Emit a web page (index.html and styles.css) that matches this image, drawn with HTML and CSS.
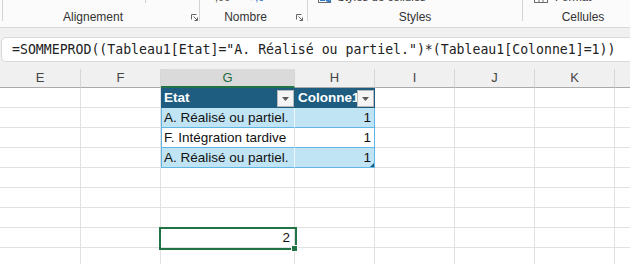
FILE: index.html
```html
<!DOCTYPE html>
<html lang="fr">
<head>
<meta charset="utf-8">
<title>Excel</title>
<link rel="stylesheet" href="styles.css">
</head>
<body>
<div class="ribbon">
  <div class="sep"></div>
  <div class="grp g1">
    <div class="top"><span class="tick"></span></div>
    <div class="lrow">
      <div class="lbl">Alignement</div>
      <div class="lnch l1"><svg width="7" height="7" viewBox="0 0 7 7"><path d="M0.5 5.5V0.5H5.5M2.5 2.5L6.5 6.5M3.5 6.5H6.5V3.5" fill="none" stroke="#666" stroke-width="1"/></svg></div>
    </div>
  </div>
  <div class="sep"></div>
  <div class="grp g2">
    <div class="top"><span class="dec">,00</span><span class="dec blue">→,0</span></div>
    <div class="lrow">
      <div class="lbl">Nombre</div>
      <div class="lnch l2"><svg width="7" height="7" viewBox="0 0 7 7"><path d="M0.5 5.5V0.5H5.5M2.5 2.5L6.5 6.5M3.5 6.5H6.5V3.5" fill="none" stroke="#666" stroke-width="1"/></svg></div>
    </div>
  </div>
  <div class="sep"></div>
  <div class="grp g3">
    <div class="top"><span class="ti"><svg width="15" height="12" viewBox="0 0 15 12"><rect x="0.5" y="0.5" width="12" height="11" fill="#fff" stroke="#6b6b6b"/><rect x="2" y="6" width="5" height="4" fill="#2f78c4"/><path d="M8 9l5 2" stroke="#2f78c4" stroke-width="2"/></svg></span><span class="tt">Styles de cellules</span></div>
    <div class="lrow"><div class="lbl">Styles</div></div>
  </div>
  <div class="sep"></div>
  <div class="grp g4">
    <div class="top"><span class="ti"><svg width="15" height="12" viewBox="0 0 15 12"><rect x="0.5" y="0.5" width="13" height="11" fill="#fff" stroke="#6b6b6b"/><path d="M5 0v12M9 0v12M0 6h14" stroke="#6b6b6b"/></svg></span><span class="tt">Format</span></div>
    <div class="lrow"><div class="lbl">Cellules</div></div>
  </div>
</div>

<div class="fbar">
  <div class="fbox">=SOMMEPROD((Tableau1[Etat]="A. Réalisé ou partiel.")*(Tableau1[Colonne1]=1))</div>
</div>

<div class="sheet">
  <div class="ch">E</div><div class="ch">F</div><div class="ch sel">G</div><div class="ch">H</div><div class="ch">I</div><div class="ch">J</div><div class="ch">K</div><div class="ch">L</div>

  <div class="c"></div><div class="c"></div>
  <div class="c th">Etat<span class="fb"><svg width="7" height="4" viewBox="0 0 7 4"><polygon points="0,0 7,0 3.5,4" fill="#5a5a5a"/></svg></span></div>
  <div class="c th th-h">Colonne1<span class="fb"><svg width="7" height="4" viewBox="0 0 7 4"><polygon points="0,0 7,0 3.5,4" fill="#5a5a5a"/></svg></span></div>
  <div class="c"></div><div class="c"></div><div class="c"></div><div class="c"></div>

  <div class="c"></div><div class="c"></div>
  <div class="c t tb tg">A. Réalisé ou partiel.</div><div class="c t tb th2 num">1</div>
  <div class="c"></div><div class="c"></div><div class="c"></div><div class="c"></div>

  <div class="c"></div><div class="c"></div>
  <div class="c t tw tg">F. Intégration tardive</div><div class="c t tw th2 num">1</div>
  <div class="c"></div><div class="c"></div><div class="c"></div><div class="c"></div>

  <div class="c"></div><div class="c"></div>
  <div class="c t tb tg">A. Réalisé ou partiel.</div><div class="c t tb th2 num last">1<span class="rh"></span></div>
  <div class="c"></div><div class="c"></div><div class="c"></div><div class="c"></div>

  <div class="c"></div><div class="c"></div><div class="c"></div><div class="c"></div><div class="c"></div><div class="c"></div><div class="c"></div><div class="c"></div>
  <div class="c"></div><div class="c"></div><div class="c"></div><div class="c"></div><div class="c"></div><div class="c"></div><div class="c"></div><div class="c"></div>
  <div class="c"></div><div class="c"></div><div class="c"></div><div class="c"></div><div class="c"></div><div class="c"></div><div class="c"></div><div class="c"></div>

  <div class="c"></div><div class="c"></div>
  <div class="c num selc">2</div>
  <div class="c"></div><div class="c"></div><div class="c"></div><div class="c"></div><div class="c"></div>

  <div class="c"></div><div class="c"></div><div class="c"></div><div class="c"></div><div class="c"></div><div class="c"></div><div class="c"></div><div class="c"></div>
</div>
</body>
</html>
```
FILE: styles.css
```css
body {
  margin: 0;
  width: 630px;
  height: 264px;
  overflow: hidden;
  background: #f0f0f0;
  font-family: "Liberation Sans", Arial, sans-serif;
}

/* Ribbon */
.ribbon {
  display: flex;
  height: 28px;
  box-sizing: border-box;
  padding-left: 2px;
  background: #fbfbfb;
  border-bottom: 1px solid #d9d9d9;
  overflow: hidden;
}
.sep {
  flex: none;
  width: 1px;
  height: 21px;
  background: #d3d3d3;
}
.grp {
  flex: none;
  display: flex;
  flex-direction: column;
}
.g1 { width: 196px; }
.g2 { width: 107px; }
.g3 { width: 214px; }
.g4 { width: 120px; }
.top {
  height: 9px;
  display: flex;
  align-items: flex-start;
  font-size: 11.5px;
  line-height: 12px;
  color: #333;
}
.top > * { margin-top: -9px; }
.g1 .top { padding-left: 142px; }
.tick {
  display: block;
  width: 1px;
  height: 12px;
  background: #d0d0d0;
}
.g2 .top { padding-left: 15px; gap: 14px; }
.dec { color: #555; font-size: 11px; }
.dec.blue { color: #2b6fc2; }
.g3 .top { padding-left: 10px; gap: 4px; }
.g4 .top { padding-left: 11px; gap: 6px; }
.ti { display: block; height: 12px; }
.ti svg { display: block; }
.lrow {
  display: flex;
  height: 16px;
  align-items: center;
}
.lbl {
  flex: 1;
  text-align: center;
  font-size: 12px;
  line-height: 16px;
  color: #333;
  white-space: nowrap;
}
.lnch {
  flex: none;
  width: 16px;
  display: flex;
  align-items: center;
  box-sizing: border-box;
}
.lnch svg { display: block; }
.l1 { padding-left: 8px; }
.l2 { padding-left: 5px; }

/* Formula bar */
.fbar {
  padding: 9px 0 7px 1px;
}
.fbox {
  width: 660px;
  height: 23px;
  box-sizing: content-box;
  display: flex;
  align-items: center;
  padding-left: 10px;
  background: #fff;
  border: 1px solid #d9d9d9;
  border-radius: 5px;
  font-family: "DejaVu Sans Mono", "Liberation Mono", monospace;
  font-size: 13.2px;
  color: #222;
  white-space: nowrap;
}

/* Sheet */
.sheet {
  display: grid;
  grid-template-columns: 81px 80px 134px 80px 80px 80px 80px 80px;
}
.ch {
  height: 18px;
  line-height: 18px;
  text-align: center;
  font-size: 13px;
  color: #444;
  background: #f0f0f0;
  border-right: 1px solid #d6d6d6;
  border-bottom: 1px solid #ababab;
}
.ch.sel {
  height: 17px;
  background: #dadada;
  color: #1d6b40;
  border-bottom: 2px solid #217346;
}
.c {
  height: 19px;
  line-height: 19px;
  padding: 0 3px;
  background: #fff;
  border-right: 1px solid #e1e1e1;
  border-bottom: 1px solid #e1e1e1;
  font-size: 13.5px;
  color: #111;
  white-space: nowrap;
  overflow: hidden;
}
.num { text-align: right; }

/* Table */
.th {
  position: relative;
  background: #1f5d80;
  color: #fff;
  font-weight: bold;
  border-bottom-color: #1f5d80;
  border-right-color: #1f5d80;
}
.fb {
  position: absolute;
  top: 2px;
  right: 0;
  width: 15px;
  height: 15px;
  border: 1px solid #b9b9b9;
  background: #f4f4f4;
  display: flex;
  align-items: center;
  justify-content: center;
}
.fb svg { display: block; }
.t { border-bottom-color: #62b6e6; }
.tb { background: #c1e4f5; }
.tw { background: #fff; }
.tg { box-shadow: inset 1px 0 0 #62b6e6; }
.tb.tg { border-right-color: #eef7fc; }
.tw.tg { border-right-color: #e1e1e1; }
.th2 { border-right-color: #62b6e6; }
.last { position: relative; }
.rh {
  position: absolute;
  right: 0;
  bottom: 0;
  width: 0;
  height: 0;
  border-left: 4px solid transparent;
  border-bottom: 4px solid #1f5d80;
}

/* Selected cell */
.selc {
  position: relative;
  overflow: visible;
  padding-right: 4px;
}
.selc::before {
  content: "";
  position: absolute;
  left: -2px;
  top: -1px;
  right: -3px;
  bottom: -3px;
  border: 2px solid #217346;
}
.selc::after {
  content: "";
  position: absolute;
  right: -4px;
  bottom: -5px;
  width: 5px;
  height: 5px;
  background: #217346;
  border: 1px solid #fff;
}
```
